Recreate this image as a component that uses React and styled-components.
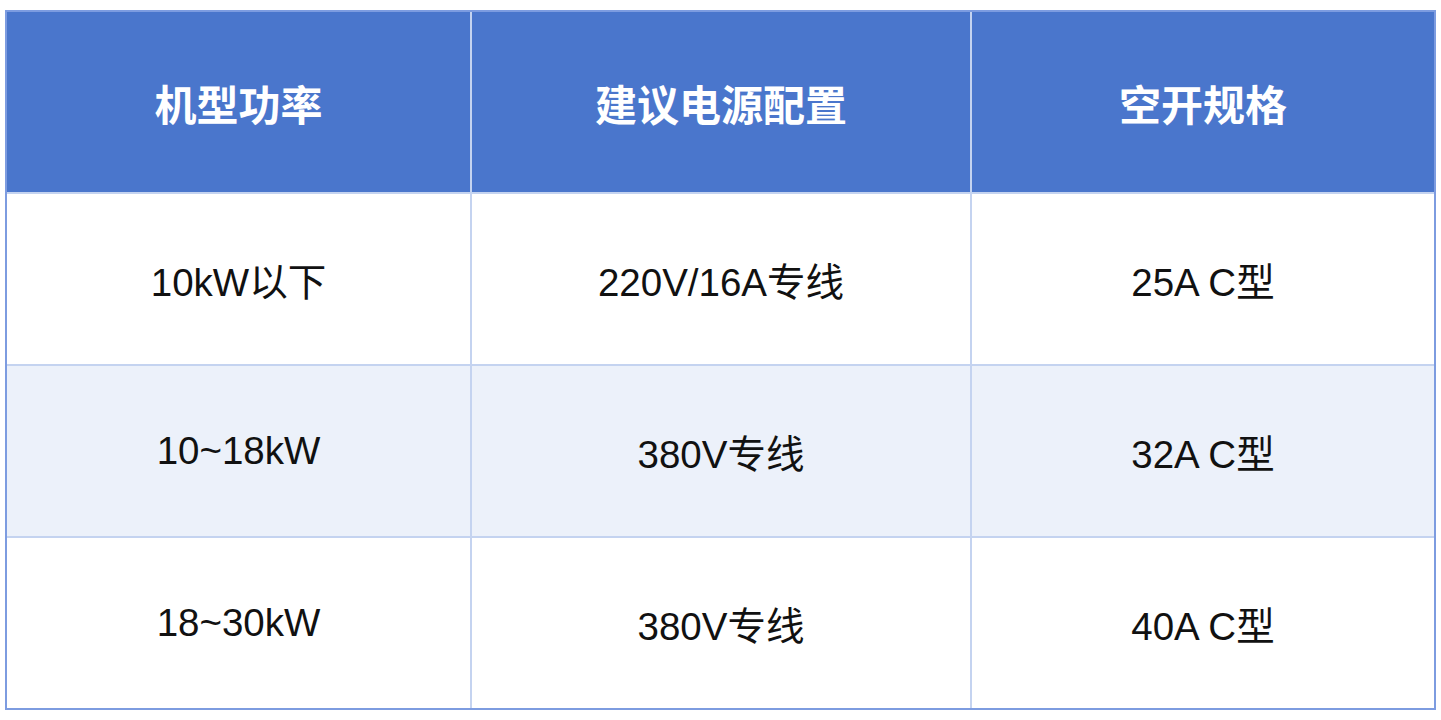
import React from "react";
import styled, { createGlobalStyle } from "styled-components";

const Global = createGlobalStyle`
  html, body { margin: 0; padding: 0; background: #ffffff; }
  body { font-family: "Liberation Sans", Arial, "Noto Sans CJK SC", sans-serif; }
`;

const Page = styled.div`
  padding: 10px 5px 10px 5px;
`;

const Table = styled.div`
  width: 1427px;
  border: 2px solid #7d9ce0;
  display: grid;
  grid-template-columns: 463px 498px 462px;
  grid-template-rows: 180px 170px 170px 170px;
  gap: 2px;
  background: #c4d3f0;
`;

const HeadCell = styled.div`
  background: #4a76cc;
  color: #ffffff;
  display: flex;
  align-items: center;
  justify-content: center;
  font-family: "Noto Sans CJK SC", "Liberation Sans", sans-serif;
  font-weight: 700;
  font-size: 42px;
  padding-top: 0;
  box-sizing: border-box;
`;

const Cell = styled.div`
  background: ${(p) => (p.$alt ? "#ecf1fa" : "#ffffff")};
  color: #111111;
  display: flex;
  align-items: center;
  justify-content: center;
  font-family: "Liberation Sans", Arial, "Noto Sans CJK SC", sans-serif;
  font-size: 38.5px;
  box-sizing: border-box;
`;

const headers = ["机型功率", "建议电源配置", "空开规格"];
const rows = [
  ["10kW以下", "220V/16A专线", "25A C型"],
  ["10~18kW", "380V专线", "32A C型"],
  ["18~30kW", "380V专线", "40A C型"],
];

export default function App() {
  return (
    <Page>
      <Global />
      <Table>
        {headers.map((h) => (
          <HeadCell key={h}>{h}</HeadCell>
        ))}
        {rows.map((r, i) =>
          r.map((c, j) => (
            <Cell key={`${i}-${j}`} $alt={i === 1}>
              {c}
            </Cell>
          ))
        )}
      </Table>
    </Page>
  );
}
